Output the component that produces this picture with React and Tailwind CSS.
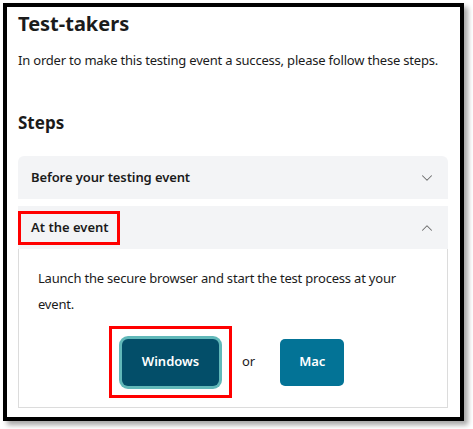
import React from "react";
import { ChevronDown, ChevronUp } from "lucide-react";

export default function App() {
	return (
		<div className="w-[473px] h-[429px] bg-white pt-[3px] pl-[3px] font-['Noto_Sans',sans-serif] text-[#1b1b1b]">
			{/* Framed card */}
			<div className="w-[461px] h-[418px] border-4 border-black bg-white shadow-[4px_4px_5px_rgba(0,0,0,0.35)] pl-[11px] pr-[12px]">
				<h1 className="text-[20px] font-bold leading-[28px] pt-[3px]">Test-takers</h1>
				<p className="text-[13px] leading-[20px] mt-[12px] tracking-[-0.2px]">
					In order to make this testing event a success, please follow these steps.
				</p>
				<h2 className="text-[17px] font-bold leading-[24px] mt-[41px]">Steps</h2>

				{/* Accordion */}
				<div className="mt-[21px] flex flex-col gap-[7px]">
					<div className="h-[43px] rounded-t-[6px] bg-[#f3f4f6] flex items-center justify-between pl-[13px] pr-[12px]">
						<span className="text-[13px] font-semibold tracking-[-0.1px]">Before your testing event</span>
						<ChevronDown size={18} strokeWidth={1.4} className="text-[#6b6b6b]" />
					</div>

					<div>
						<div className="h-[43px] bg-[#f3f4f6] flex items-center justify-between pr-[12px]">
							<span className="border-[3px] border-[#ff0000] h-[34px] flex items-center pl-[10px] pr-[8px] text-[13px] font-semibold">
								At the event
							</span>
							<ChevronUp size={18} strokeWidth={1.4} className="text-[#6b6b6b]" />
						</div>
						<div className="h-[159px] border border-t-0 border-[#dcdcdc] pt-[16px]">
							<p className="text-[13px] leading-[26px] pl-[19px] pr-[20px] tracking-[-0.2px]">
								Launch the secure browser and start the test process at your event.
							</p>
							<div className="flex items-center mt-[9px] ml-[90px]">
								<div className="border-[3px] border-[#ff0000] w-[123px] h-[72px] flex items-center justify-center">
									<button className="w-[97px] h-[47px] rounded-[6px] bg-[#034e69] text-white text-[13px] font-semibold ring-[3px] ring-[#3aa6a8]/80">
										Windows
									</button>
								</div>
								<span className="ml-[10px] text-[13px]">or</span>
								<button className="ml-[25px] w-[64px] h-[47px] rounded-[5px] bg-[#037396] text-white text-[13px] font-semibold">
									Mac
								</button>
							</div>
						</div>
					</div>
				</div>
			</div>
		</div>
	);
}
